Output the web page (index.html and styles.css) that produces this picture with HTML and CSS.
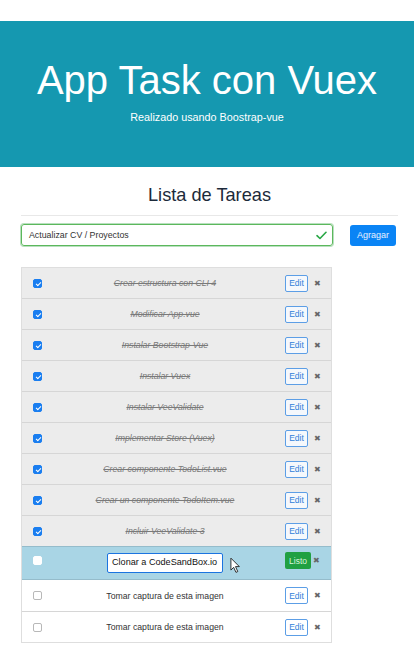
FILE: index.html
```html
<!DOCTYPE html>
<html lang="es">
<head>
<meta charset="utf-8">
<title>App Task con Vuex</title>
<link rel="stylesheet" href="styles.css">
</head>
<body>
<header class="jumbo">
  <h1 class="jumbo-title">App Task con Vuex</h1>
  <p class="jumbo-sub">Realizado usando Boostrap-vue</p>
</header>
<main class="container">
  <h2 class="list-title">Lista de Tareas</h2>
  <hr class="divider">
  <form class="add-form">
    <div class="add-input">
      <span class="add-text">Actualizar CV / Proyectos</span>
      <svg class="valid-icon" viewBox="0 0 12 10" width="11" height="9"><path d="M1 5.2 L4.3 8.3 L11 1.4" fill="none" stroke="#28a745" stroke-width="1.8" stroke-linecap="round" stroke-linejoin="round"/></svg>
    </div>
    <button type="button" class="btn-add">Agragar</button>
  </form>

  <ul class="tasks">
    <li class="task done"><span class="cb on"></span><span class="task-text">Crear estructura con CLI 4</span><span class="actions"><span class="btn-edit">Edit</span><span class="del">&#x2716;</span></span></li>
    <li class="task done"><span class="cb on"></span><span class="task-text">Modificar App.vue</span><span class="actions"><span class="btn-edit">Edit</span><span class="del">&#x2716;</span></span></li>
    <li class="task done"><span class="cb on"></span><span class="task-text">Instalar Bootstrap-Vue</span><span class="actions"><span class="btn-edit">Edit</span><span class="del">&#x2716;</span></span></li>
    <li class="task done"><span class="cb on"></span><span class="task-text">Instalar Vuex</span><span class="actions"><span class="btn-edit">Edit</span><span class="del">&#x2716;</span></span></li>
    <li class="task done"><span class="cb on"></span><span class="task-text">Instalar VeeValidate</span><span class="actions"><span class="btn-edit">Edit</span><span class="del">&#x2716;</span></span></li>
    <li class="task done"><span class="cb on"></span><span class="task-text">Implementar Store (Vuex)</span><span class="actions"><span class="btn-edit">Edit</span><span class="del">&#x2716;</span></span></li>
    <li class="task done"><span class="cb on"></span><span class="task-text">Crear componente TodoList.vue</span><span class="actions"><span class="btn-edit">Edit</span><span class="del">&#x2716;</span></span></li>
    <li class="task done"><span class="cb on"></span><span class="task-text">Crear un componente TodoItem.vue</span><span class="actions"><span class="btn-edit">Edit</span><span class="del">&#x2716;</span></span></li>
    <li class="task done"><span class="cb on"></span><span class="task-text">Incluir VeeValidate 3</span><span class="actions"><span class="btn-edit">Edit</span><span class="del">&#x2716;</span></span></li>
    <li class="task editing"><span class="cb"></span><span class="task-text"><span class="edit-input">Clonar a CodeSandBox.io</span></span><span class="actions"><span class="btn-done">Listo</span><span class="del">&#x2716;</span></span>
      <svg class="cursor" viewBox="0 0 12 18" width="11" height="17"><path d="M1 1 L1 14 L4 11 L6.5 16.5 L8.5 15.6 L6 10.2 L10.2 10.2 Z" fill="#fff" stroke="#222" stroke-width="1" stroke-linejoin="round"/></svg>
    </li>
    <li class="task"><span class="cb"></span><span class="task-text">Tomar captura de esta imagen</span><span class="actions"><span class="btn-edit">Edit</span><span class="del">&#x2716;</span></span></li>
    <li class="task"><span class="cb"></span><span class="task-text">Tomar captura de esta imagen</span><span class="actions"><span class="btn-edit">Edit</span><span class="del">&#x2716;</span></span></li>
  </ul>
</main>
</body>
</html>
```
FILE: styles.css
```css
* { box-sizing: border-box; }
html, body { margin: 0; padding: 0; background: #fff; }
body {
  font-family: "Liberation Sans", Arial, sans-serif;
  color: #212529;
}
.jumbo {
  margin-top: 21px;
  height: 146px;
  background: #1598b0;
  color: #fff;
  text-align: center;
  padding-top: 35px;
}
.jumbo-title {
  margin: 0;
  font-size: 40px;
  font-weight: 400;
  line-height: 48px;
}
.jumbo-sub {
  margin: 6px 0 0;
  font-size: 10.8px;
  line-height: 14px;
}
.container {
  padding: 16px 16px 0 21px;
}
.list-title {
  margin: 0;
  text-align: center;
  font-size: 18.2px;
  font-weight: 400;
  color: #1c2a3a;
  line-height: 24px;
}
.divider {
  margin: 8px 0 0;
  border: 0;
  border-top: 1px solid #e8e8e8;
}
.add-form {
  display: flex;
  align-items: center;
  margin-top: 8px;
}
.add-input {
  width: 312px;
  height: 22px;
  border: 1px solid #5cb85c;
  box-shadow: 0 0 0 1px #b9e0bf;
  border-radius: 3px;
  display: flex;
  align-items: center;
  justify-content: space-between;
  padding: 0 5px 0 7px;
}
.add-text { font-size: 8.8px; color: #333; }
.valid-icon { display: block; }
.btn-add {
  margin-left: 17px;
  width: 46px;
  height: 21px;
  border: 0;
  border-radius: 3px;
  background: #0a84f5;
  color: #e8f1ff;
  font-family: "Liberation Sans", Arial, sans-serif;
  font-size: 9px;
  padding: 0;
}
.tasks {
  list-style: none;
  margin: 21px 0 0;
  padding: 0;
  width: 311px;
  border: 1px solid #dedede;
}
.task {
  position: relative;
  display: grid;
  grid-template-columns: 35px 1fr 58px;
  align-items: center;
  height: 31px;
  border-top: 1px solid #d6d6d6;
  background: #fff;
}
.task:first-child { border-top: 0; height: 30px; }
.task.done { background: #ececec; }
.task.editing { background: #a9d5e5; height: 34px; border-top-color: #95bccb; border-bottom: 1px solid #95bccb; }
.task.editing + .task { border-top: 0; }
.cb {
  margin-left: 11px;
  width: 9px;
  height: 9px;
  border-radius: 2px;
  border: 1px solid #b8b8b8;
  background: #fff;
  position: relative;
}
.cb.on {
  background: #1a7ef0;
  border-color: #1a7ef0;
}
.cb.on::after {
  content: "";
  position: absolute;
  left: 2.5px;
  top: 1px;
  width: 2px;
  height: 4px;
  border: solid #fff;
  border-width: 0 1px 1px 0;
  transform: rotate(45deg);
}
.task.editing .cb { margin-top: -6px; border-color: #fff; }
.task-text {
  text-align: center;
  font-size: 8.7px;
  color: #333;
  white-space: nowrap;
}
.done .task-text {
  font-style: italic;
  text-decoration: line-through;
  color: #7a7a7a;
}
.edit-input {
  display: inline-block;
  width: 116px;
  height: 20px;
  line-height: 17px;
  border: 1.5px solid #1b74e0;
  border-radius: 2px;
  background: #fff;
  color: #111;
  font-size: 9.1px;
  text-align: left;
  padding-left: 4px;
}
.actions {
  display: flex;
  align-items: center;
  padding-left: 12px;
}
.btn-edit {
  width: 23px;
  height: 17px;
  border: 1px solid #5c9ee6;
  border-radius: 2px;
  font-size: 8.5px;
  color: #2f7fd9;
  background: #fff;
  display: flex;
  align-items: center;
  justify-content: center;
}
.done .btn-edit { background: #f5f8fc; }
.btn-done {
  width: 26px;
  height: 17px;
  border-radius: 2px;
  background: #20a042;
  color: #d8f5dd;
  font-size: 8.5px;
  display: flex;
  align-items: center;
  justify-content: center;
  margin-top: -5px;
}
.del {
  margin-left: 6px;
  font-size: 8px;
  font-family: "DejaVu Sans", sans-serif;
  color: #666;
}
.editing .del { margin-left: 2px; margin-top: -5px; }
.cursor {
  position: absolute;
  left: 208px;
  top: 10px;
}
```
